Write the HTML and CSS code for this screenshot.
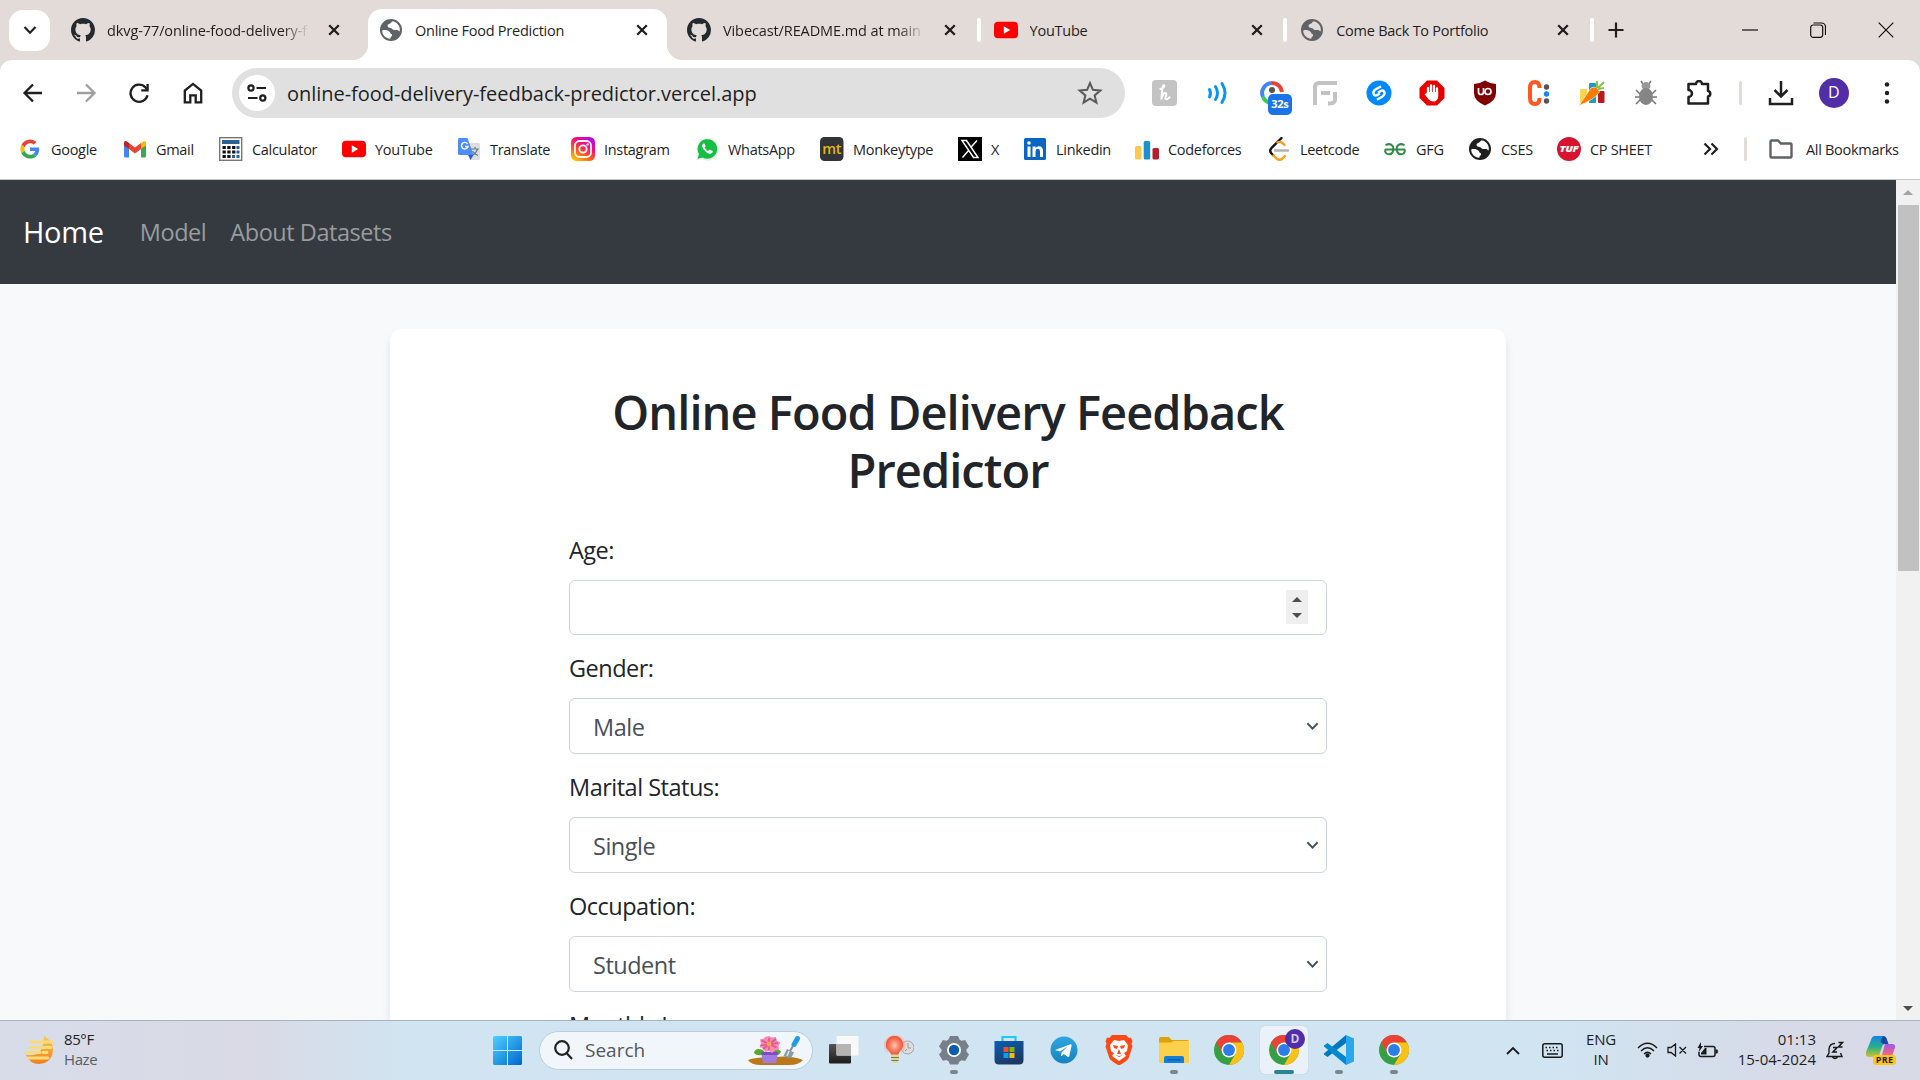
FILE: index.html
```html
<!DOCTYPE html>
<html lang="en">
<head>
<meta charset="utf-8">
<title>Online Food Prediction</title>
<link rel="stylesheet" href="styles.css">
</head>
<body>
<svg class="defs" aria-hidden="true">
  <symbol id="github" viewBox="0 0 16 16"><path fill="#24292f" d="M8 0C3.58 0 0 3.58 0 8c0 3.54 2.29 6.53 5.47 7.59.4.07.55-.17.55-.38 0-.19-.01-.82-.01-1.49-2.01.37-2.53-.49-2.69-.94-.09-.23-.48-.94-.82-1.13-.28-.15-.68-.52-.01-.53.63-.01 1.08.58 1.23.82.72 1.21 1.87.87 2.33.66.07-.52.28-.87.51-1.07-1.78-.2-3.64-.89-3.64-3.95 0-.87.31-1.59.82-2.15-.08-.2-.36-1.02.08-2.12 0 0 .67-.21 2.2.82.64-.18 1.32-.27 2-.27.68 0 1.36.09 2 .27 1.53-1.04 2.2-.82 2.2-.82.44 1.1.16 1.92.08 2.12.51.56.82 1.27.82 2.15 0 3.07-1.87 3.75-3.65 3.95.29.25.54.73.54 1.48 0 1.07-.01 1.93-.01 2.2 0 .21.15.46.55.38A8.01 8.01 0 0 0 16 8c0-4.42-3.58-8-8-8z"/></symbol>
  <symbol id="globe" viewBox="0 0 24 24"><circle cx="12" cy="12" r="11" fill="currentColor"/><path fill="var(--hole)" d="M3.2 12.500c2.800-.8 5.600-.3 7.300 1.200 1 .9.6 2 1.800 2.300 1.200.300 1 1.800.100 2.600-.9.700-.9 1.500-1.100 2.200C6.700 20.600 3.200 17 3.200 12.500zM13.600 3.300c-1.200.4-1.200 1.300-2.100 1.900-1 .7-3 .9-3 2.500 0 1.800 1.600 2.200 3 2.200 1.500 0 1.900 1.700 3.300 2.100 1.500.4 2.700-.5 4 .2.900.5 1.200 1.300 1.900 1.100.9-3.800-1.500-8.800-7.100-10z"/></symbol>
  <symbol id="youtube" viewBox="0 0 24 24"><rect y="3.800" width="24" height="16.400" rx="4" fill="#f00"/><path fill="#fff" d="M9.800 8.300v7.400l6.400-3.700z"/></symbol>
  <symbol id="close" viewBox="0 0 12 12"><path d="M1.200 1.200l9.600 9.600M10.800 1.200l-9.600 9.600" stroke="#1f1f1f" stroke-width="2.300"/></symbol>
  <symbol id="chrome" viewBox="0 0 48 48"><circle cx="24" cy="24" r="24" fill="#34a043"/><path fill="#ea4335" d="M3.200 12A24 24 0 0 1 44.800 12H24L13.600 30z"/><path fill="#fbc116" d="M44.800 12A24 24 0 0 1 24 48L34.400 30 24 12z"/><circle cx="24" cy="24" r="12" fill="#fff"/><circle cx="24" cy="24" r="9.500" fill="#2b7de9"/></symbol>
  <symbol id="chevron" viewBox="0 0 14 10"><path d="M1.500 2l5.500 5.800L12.500 2" fill="none" stroke="currentColor" stroke-width="2.100"/></symbol>
</svg>

<header class="tabstrip">
  <div class="tab-search"><svg width="14" height="10"><use href="#chevron"/></svg></div>
  <div class="tab"><svg width="24" height="24"><use href="#github"/></svg><span class="tab-title fade">dkvg-77/online-food-delivery-f</span><svg class="x" width="12" height="12"><use href="#close"/></svg></div>
  <div class="tab active"><svg class="grey" width="24" height="24"><use href="#globe"/></svg><span class="tab-title">Online Food Prediction</span><svg class="x" width="12" height="12"><use href="#close"/></svg></div>
  <div class="tab sep"><svg width="24" height="24"><use href="#github"/></svg><span class="tab-title fade">Vibecast/README.md at main ·</span><svg class="x" width="12" height="12"><use href="#close"/></svg></div>
  <div class="tab sep"><svg width="24" height="24"><use href="#youtube"/></svg><span class="tab-title">YouTube</span><svg class="x" width="12" height="12"><use href="#close"/></svg></div>
  <div class="tab sep"><svg class="grey" width="24" height="24"><use href="#globe"/></svg><span class="tab-title">Come Back To Portfolio</span><svg class="x" width="12" height="12"><use href="#close"/></svg></div>
  <svg class="newtab" width="16" height="16" viewBox="0 0 16 16"><path d="M8 .5v15M.5 8h15" stroke="#1f1f1f" stroke-width="2.200"/></svg>
  <div class="window-buttons">
    <svg width="16" height="16" viewBox="0 0 16 16"><path d="M0 8h16" stroke="#111" stroke-width="1.200"/></svg>
    <svg width="16" height="16" viewBox="0 0 16 16" fill="none" stroke="#111" stroke-width="1.200"><rect x=".7" y="3" width="12" height="12.300" rx="2.500"/><path d="M3.500 1h8a4 4 0 0 1 4 4v8"/></svg>
    <svg width="16" height="16" viewBox="0 0 16 16"><path d="M.7.700l14.600 14.600M15.300.700L.7 15.300" stroke="#111" stroke-width="1.200"/></svg>
  </div>
</header>

<div class="chrome-panel">
<div class="toolbar">
  <div class="nav-buttons">
    <svg width="24" height="24" viewBox="0 0 24 24" fill="none" stroke="#1f1f1f" stroke-width="2.300"><path d="M21 12H4M12 3.500L3.500 12l8.500 8.500"/></svg>
    <svg width="24" height="24" viewBox="0 0 24 24" fill="none" stroke="#9e9e9e" stroke-width="2.300"><path d="M3 12h17M12 3.500l8.500 8.500-8.500 8.500"/></svg>
    <svg width="24" height="24" viewBox="0 0 24 24" fill="none" stroke="#1f1f1f" stroke-width="2.300"><path d="M20.500 14.200A8.600 8.600 0 1 1 18.500 6.400L20 8.200"/><path d="M20.600 3v6.300h-6.300"/></svg>
    <svg width="24" height="24" viewBox="0 0 24 24" fill="none" stroke="#1f1f1f" stroke-width="2.300"><path d="M3.800 21.400V9.600L12 2.900l8.200 6.700v11.800h-5.500v-7H9.300v7z"/></svg>
  </div>
  <div class="omnibox">
    <div class="site-info"><svg width="20" height="20" viewBox="0 0 20 20" fill="none" stroke="#1f1f1f" stroke-width="2.200"><circle cx="4" cy="5" r="2.600"/><path d="M9.500 5H19M1 15h9.500"/><circle cx="15.800" cy="15" r="2.600"/></svg></div>
    <span class="url">online-food-delivery-feedback-predictor.vercel.app</span>
    <svg width="26" height="26" viewBox="0 0 24 24" fill="none" stroke="#5a5a5a" stroke-width="1.900"><path d="M12 2.800l2.700 6.300 6.800.6-5.200 4.500 1.600 6.700-5.900-3.600-5.900 3.600 1.600-6.700L2.500 9.700l6.800-.6z"/></svg>
  </div>
  <div class="extensions">
    <svg viewBox="0 0 26 26"><rect width="25" height="26" rx="4" fill="#c3c3c3"/><path d="M7.500 9c3 0 6-3 4.500-3.800-1.500-.4-2 5-2.600 14.300 1-5 3-7.500 4.600-6.500 1.600 1.500-2.500 6 .4 6.200 1.800.1 2.600-1 3.600-2.500" fill="none" stroke="#fff" stroke-width="2"/></svg>
    <svg viewBox="0 0 26 26" fill="none" stroke="#0b93f6" stroke-width="3" stroke-linecap="round"><path d="M4.500 9.500q2 4 0 7.500M10.500 6.500q4 6.500 0 13M17 3.500q6 9.500 0 19"/></svg>
    <div class="ext-timer"><svg viewBox="0 0 26 26" fill="none" stroke-width="4"><path d="M13 3A10 10 0 0 1 23 12" stroke="#ea4335"/><path d="M13 3A10 10 0 0 0 4 17" stroke="#4285f4"/><path d="M4 17a10 10 0 0 0 9 6" stroke="#33d14d"/><circle cx="13" cy="10" r="3" fill="#555"/></svg><b>32s</b></div>
    <svg viewBox="0 0 26 26" fill="none" stroke="#c3c3c3" stroke-width="4"><path d="M3 25V7q0-4 4-4h18M9 13h9M23 12v8q0 3.500-7 3.500"/></svg>
    <svg viewBox="0 0 26 26"><circle cx="13" cy="13" r="12.500" fill="#08f"/><path d="M15 6.200L9.500 9.600c-4 2.700-1.500 7 1.600 5.600l2.800-1.900M11 19.800l5.500-3.400c4-2.700 1.500-7-1.600-5.600l-2.800 1.900" fill="none" stroke="#fff" stroke-width="2.400"/></svg>
    <svg viewBox="0 0 26 26"><path fill="#e60000" d="M8 .5h10l7.500 7.500v10L18 25.500H8L.5 18V8z"/><path d="M9 13V8M12 12V5.500M15 12V6M18 13V8.500" stroke="#fff" stroke-width="2.300" stroke-linecap="round"/><path fill="#fff" d="M8 12h11.200v4c0 3.500-2 5.500-5 5.500-3.500 0-5.500-3-8.700-7.500l2-.7z"/></svg>
    <svg viewBox="0 0 26 26"><path fill="#800000" d="M13 .5q5.500 3.500 11 3.500v9q0 8-11 12.500Q2 21 2 13V4q5.500 0 11-3.500z"/><path d="M6.500 8v4a2.500 2.500 0 0 0 5 0V8" fill="none" stroke="#fff" stroke-width="1.700"/><circle cx="16" cy="11.500" r="3" fill="none" stroke="#fff" stroke-width="1.700"/></svg>
    <svg viewBox="0 0 26 26"><path d="M13.500 8q0-6-4.500-6Q4 2 4 8v10q0 6 5 6 4.500 0 4.500-6" fill="none" stroke="#ff5722" stroke-width="4"/><circle cx="20.500" cy="7" r="2.700" fill="#555"/><circle cx="20.500" cy="14" r="2.700" fill="#1e88e5"/><circle cx="20.500" cy="21" r="2.700" fill="#555"/></svg>
    <svg viewBox="0 0 26 26"><rect x="1" y="9" width="7" height="14" rx="1" fill="#ffd54f"/><rect x="10" y="3" width="7" height="20" rx="1" fill="#2196c9"/><rect x="19" y="11" width="6.500" height="12" rx="1" fill="#b71c1c"/><path fill="#f57c00" stroke="#fff" stroke-width=".6" d="M0 25.500L12 8q6-3 8.500 4Q15 20 0 25.500z"/><path d="M18 8V1M19 8l6-6M19 9l6-1" stroke="#8bc34a" stroke-width="2.200"/></svg>
    <svg viewBox="0 0 26 26"><path d="M3 10l4 4M2 17h6M3 24l5-5M23 10l-4 4M24 17h-6M23 24l-5-5M10 4L8 1M16 4l2-3" stroke="#777" stroke-width="1.500"/><ellipse cx="13" cy="6" rx="4.500" ry="4" fill="#999"/><ellipse cx="13" cy="16.500" rx="7" ry="8.500" fill="#858585"/></svg>
    <svg viewBox="0 0 26 26"><path d="M2.500 4H10a3 3 0 0 1 6 0h6v7a2.800 2.800 0 0 1 0 5.500v7h-19.500v-6.500a3.500 3.500 0 0 0 0-7z" fill="none" stroke="#1f1f1f" stroke-width="2.500" stroke-linejoin="round"/></svg>
  </div>
  <i class="divider"></i>
  <div class="toolbar-end">
    <svg width="26" height="26" viewBox="0 0 26 26" fill="none" stroke="#1f1f1f" stroke-width="2.500"><path d="M13 1v15M6.500 10l6.500 6.500 6.500-6.500M2 18v6h22v-6"/></svg>
    <div class="avatar">D</div>
    <svg width="26" height="26" viewBox="0 0 26 26" fill="#1f1f1f"><circle cx="13" cy="4.500" r="2.200"/><circle cx="13" cy="13" r="2.200"/><circle cx="13" cy="21.500" r="2.200"/></svg>
  </div>
</div>

<nav class="bookmarks">
  <div class="bm"><svg viewBox="-6 -6 60 60"><path fill="#EA4335" d="M24 9.500c3.540 0 6.710 1.220 9.210 3.600l6.850-6.850C35.900 2.380 30.470 0 24 0 14.620 0 6.510 5.380 2.560 13.220l7.980 6.190C12.430 13.720 17.740 9.500 24 9.500z"/><path fill="#4285F4" d="M46.980 24.550c0-1.570-.15-3.090-.38-4.550H24v9.020h12.940c-.58 2.960-2.260 5.480-4.780 7.180l7.730 6c4.510-4.180 7.090-10.360 7.090-17.650z"/><path fill="#FBBC05" d="M10.530 28.590c-.48-1.450-.76-2.990-.76-4.590s.27-3.140.76-4.590l-7.980-6.190C.92 16.460 0 20.120 0 24c0 3.880.92 7.540 2.560 10.780l7.970-6.190z"/><path fill="#34A853" d="M24 48c6.480 0 11.930-2.130 15.890-5.810l-7.730-6c-2.150 1.450-4.920 2.300-8.160 2.300-6.260 0-11.570-4.220-13.470-9.910l-7.980 6.190C6.510 42.620 14.620 48 24 48z"/></svg><span>Google</span></div>
  <div class="bm"><svg viewBox="0 0 24 24"><path fill="#4285f4" d="M1 5v14q0 1.500 1.500 1.500H6V10z"/><path fill="#34a853" d="M23 5v14q0 1.500-1.500 1.500H18V10z"/><path fill="#fbbc04" d="M18 6l2-1.500Q23 3 23 6v2.500L18 12z"/><path fill="#c5221f" d="M6 6L4 4.500Q1 3 1 6v2.500L6 12z"/><path fill="#ea4335" d="M6 6l6 4.500L18 6v6l-6 4.500L6 12z"/></svg><span>Gmail</span></div>
  <div class="bm"><svg viewBox="0 0 24 24"><rect x=".7" y=".7" width="22" height="22.600" fill="#fff" stroke="#777" stroke-width="1.400"/><path fill="#2b5f91" d="M3 3h17.500v4H3z"/><g stroke-width="3" stroke-dasharray="3.300 1.500"><path stroke="#111" d="M3.500 10.500h13M3.500 15h13M3.500 19.500h9"/><path stroke="#2b5f91" stroke-dasharray="none" d="M17.500 10.500h3M17.500 15h3M13 19.500h3M17.500 19.500h3"/></g></svg><span>Calculator</span></div>
  <div class="bm"><svg><use href="#youtube"/></svg><span>YouTube</span></div>
  <div class="bm"><svg viewBox="0 0 24 24"><path fill="#dedede" d="M10 6h11.500Q23 6 23 7.500v14q0 1.500-1.500 1.500H14z"/><path d="M14 12h8M18 10v2M20.500 12q-1 4-5.500 6.500M15.500 14q2 3.500 5.500 4.500" stroke="#607d8b" fill="none" stroke-width="1.200"/><path fill="#4d8df6" d="M2 1h8.500L16.500 18H2.500Q1 18 1 16.500V2.500Q1 1 2 1z"/><path fill="#3157c9" d="M11 18h5.500l-3 5z"/><path d="M10.500 6.800A3.300 3.300 0 1 0 11 9.500H8" fill="none" stroke="#fff" stroke-width="1.400"/></svg><span>Translate</span></div>
  <div class="bm"><svg viewBox="0 0 24 24"><defs><linearGradient id="ig" x1=".2" y1="1" x2=".8" y2="0"><stop offset="0" stop-color="#ffc400"/><stop offset=".35" stop-color="#ff5a1f"/><stop offset=".65" stop-color="#ff0a78"/><stop offset="1" stop-color="#b400ff"/></linearGradient></defs><rect width="24" height="24" rx="5.500" fill="url(#ig)"/><g fill="none" stroke="#fff" stroke-width="1.800"><rect x="4" y="4" width="16" height="16" rx="4.500"/><circle cx="12" cy="12" r="3.700"/></g><circle cx="16.600" cy="7.400" r="1.200" fill="#fff"/></svg><span>Instagram</span></div>
  <div class="bm"><svg viewBox="0 0 24 24"><path fill="#e8e8e8" d="M1 23.500l1.800-6A11 11 0 1 1 7 22z"/><path fill="#12c143" d="M2.600 21.800L4 17A9.800 9.800 0 1 1 7.600 20.500z"/><path fill="#fff" d="M8.500 6.500c-2 1-1.600 3.500 0 5.700 2 2.900 4.500 4.700 7 4.500 1.700-.3 2.300-1.500 2.200-2.700l-2.900-1.500-1.400 1.600c-1.800-.7-3-1.900-3.800-3.500l1.100-1.400-1.200-2.800z"/></svg><span>WhatsApp</span></div>
  <div class="bm"><svg viewBox="0 0 24 24"><rect width="23.500" height="24" rx="4.500" fill="#323437"/><text x="11.800" y="16.500" font-size="14.500" font-weight="600" fill="#e2b714" text-anchor="middle" textLength="19" class="glyph">mt</text></svg><span>Monkeytype</span></div>
  <div class="bm"><svg viewBox="0 0 24 24"><path d="M0 0h24v24H0z"/><path d="M4 3.500h4.500L20 20.500h-4.500zM19 3.500l-6.300 7M10.800 13.300L4.500 20.500" fill="none" stroke="#fff" stroke-width="1.500"/></svg><span>X</span></div>
  <div class="bm"><svg viewBox="0 0 24 24"><rect x="1" y="1" width="22" height="22" rx="1.500" fill="#0a66c2"/><path fill="#fff" d="M4.500 9.500h3V20h-3zM9.500 9.500h3V11q1-1.800 3.500-1.800 4 0 4 4.800v6h-3v-5.500q0-2.700-2-2.700-2.500 0-2.500 3V20h-3z"/><circle cx="6" cy="6" r="1.800" fill="#fff"/></svg><span>Linkedin</span></div>
  <div class="bm"><svg viewBox="0 0 24 24"><rect x="0" y="9" width="6.500" height="13.500" rx="1.500" fill="#f8ca4d"/><rect x="8.700" y="4" width="6.500" height="18.500" rx="1.500" fill="#1f8fd0"/><rect x="17.500" y="11" width="6.500" height="11.500" rx="1.500" fill="#b51e2d"/></svg><span>Codeforces</span></div>
  <div class="bm"><svg viewBox="0 0 24 24" fill="none" stroke-width="2.400" stroke-linecap="round"><path d="M8 13.500h13" stroke="#b3b3b3"/><path d="M14.500 1L4.500 11q-2.500 3 0 5.500l2 2" stroke="#111"/><path d="M6.500 18.500l3 3q3 2.500 6 0l2.500-2.500M17.500 8L15.500 6q-2.500-2-5-.5" stroke="#ffa116"/></svg><span>Leetcode</span></div>
  <div class="bm"><svg viewBox="0 0 24 24" fill="none" stroke="#2f8d46" stroke-width="2"><path d="M2 12.500h20M2.500 8.200q5-2.700 7.500 1.300 1 3-.5 6-2.500 3-6 1-2-1.800-1-4M21.500 8.200q-5-2.700-7.500 1.300-1 3 .5 6 2.500 3 6 1 2-1.800 1-4"/></svg><span>GFG</span></div>
  <div class="bm dark"><svg><use href="#globe"/></svg><span>CSES</span></div>
  <div class="bm"><svg viewBox="0 0 24 24"><circle cx="12" cy="12" r="12" fill="#d7142e"/><text x="12" y="15" font-size="8" font-weight="800" font-style="italic" fill="#fff" text-anchor="middle" textLength="19" lengthAdjust="spacingAndGlyphs" class="glyph">TUF</text></svg><span>CP SHEET</span></div>
  <svg class="more" width="16" height="14" viewBox="0 0 16 14" fill="none" stroke="#1f1f1f" stroke-width="2.200"><path d="M1.500 1.500L7 7l-5.500 5.500M8.500 1.500L14 7l-5.500 5.500"/></svg>
  <i class="divider"></i>
  <div class="bm all"><svg viewBox="0 0 24 24" fill="none" stroke="#5f6368" stroke-width="2.400"><path d="M1.500 4.500q0-1 1-1H9l2.800 3h9.700q1 0 1 1v12q0 1-1 1h-19q-1 0-1-1z"/></svg><span>All Bookmarks</span></div>
</nav>
</div>

<div class="viewport">
  <main class="page">
    <nav class="navbar"><a class="brand">Home</a><a>Model</a><a>About Datasets</a></nav>
    <section class="card">
      <h1>Online Food Delivery Feedback<br>Predictor</h1>
      <form class="form">
        <label>Age:</label>
        <div class="control number"><span class="spinner"><i class="tri up"></i><i class="tri down"></i></span></div>
        <label>Gender:</label>
        <div class="control select"><span>Male</span><svg width="13" height="10"><use href="#chevron"/></svg></div>
        <label>Marital Status:</label>
        <div class="control select"><span>Single</span><svg width="13" height="10"><use href="#chevron"/></svg></div>
        <label>Occupation:</label>
        <div class="control select"><span>Student</span><svg width="13" height="10"><use href="#chevron"/></svg></div>
        <label>Monthly Income:</label>
      </form>
    </section>
  </main>
  <aside class="scrollbar"><i class="tri up"></i><div class="thumb"></div><i class="tri down"></i></aside>
</div>

<footer class="taskbar">
  <div class="weather">
    <svg width="31" height="30" viewBox="0 0 31 30"><defs><linearGradient id="moon" x1="0" y1="0" x2="0" y2="1"><stop offset="0" stop-color="#fcc94d"/><stop offset="1" stop-color="#f07f1d"/></linearGradient></defs><path fill="url(#moon)" d="M20 1q8 5 9 12 0 15-14 16Q6 29 2 20q18 3 18-19z"/><path d="M7 7h22M6 12.500h21M2 17.500h14M19 17.500h4M4 23h20" stroke="#f9dc7a" stroke-width="2.800" stroke-linecap="round"/></svg>
    <p><span>85°F</span><span class="dim">Haze</span></p>
  </div>
  <svg class="start" width="29" height="29" viewBox="0 0 29 29"><defs><linearGradient id="win" x1="0" y1="0" x2="1" y2="1"><stop offset="0" stop-color="#4fd0ff"/><stop offset="1" stop-color="#0067cf"/></linearGradient></defs><path fill="url(#win)" d="M1 0h13v14H0V1zM15 0h13l1 1v13H15zM0 15h14v14H1l-1-1zM15 15h14v13l-1 1H15z"/></svg>
  <div class="search">
    <svg width="19" height="20" viewBox="0 0 19 20" fill="none" stroke="#222" stroke-width="2.200"><circle cx="8" cy="8" r="6.800"/><path d="M12.500 13l5.500 6"/></svg>
    <span>Search</span>
    <svg width="58" height="32" viewBox="0 0 58 32"><path fill="#b9791b" d="M1 26q8-3 26-3 18-2 29 3-4 5-14 5H14Q4 31 1 26z"/><path fill="#5aa832" d="M7 19q1-6 9-3l3 4q-9 3-12-1zM34 17q-7-4-10 4 9 2 10-4z"/><path fill="#a07be2" d="M14 18h17l-2 11H16z"/><path fill="#7a4dc0" d="M14 18h17l-.5 3h-16z"/><path fill="#f78ab4" d="M22 2l3 1.500 4-.5.5 3.500 4 2-2 3.500.5 4-4 .5-3 2.500-3-2-4 1-1.500-3.500-4-1.500 1.500-3.500-1-4 4-1L18 3z"/><path d="M22 4v12M14.500 6.500l15 7M29 5l-13 10M13.500 11.500L31 9" stroke="#e2528c" stroke-width="1.600"/><circle cx="22" cy="10" r="2.500" fill="#f9a04a"/><path d="M50.500 4.500l-3.500 6" stroke="#1e9be5" stroke-width="5" stroke-linecap="round"/><path d="M46 12l-3 5" stroke="#78909c" stroke-width="2"/><path fill="#8b9ba5" d="M40 15l7 3.500-3 5.500q-3 .5-7.500-2z"/><path d="M42 17l-2 5" stroke="#dfe6ea" stroke-width="1.500"/></svg>
  </div>
  <div class="apps">
    <div class="app"><svg viewBox="0 0 30 30"><defs><linearGradient id="tv" x1="0" y1="0" x2="0" y2="1"><stop offset="0" stop-color="#555"/><stop offset="1" stop-color="#1c1c1c"/></linearGradient></defs><rect x="0" y="9" width="22" height="19.500" rx="1" fill="url(#tv)"/><rect x="7.500" y="1" width="22" height="19.500" rx="1" fill="#f8f8f8"/><path fill="#b4b4b4" d="M7.500 9H22v11.500H7.500z"/></svg></div>
    <div class="app"><svg viewBox="0 0 30 30"><defs><radialGradient id="bulb"><stop offset="0" stop-color="#ffc9ba"/><stop offset=".45" stop-color="#fb8a70"/><stop offset="1" stop-color="#f2512f"/></radialGradient></defs><circle cx="23.500" cy="12.500" r="6.500" fill="#dcdcdc" stroke="#a8a8a8"/><path d="M24 8v5h3M21 16l2-2" stroke="#999" fill="none"/><path fill="#f5a695" opacity=".5" d="M10.500 0a10.500 10 0 0 1 8 17H3a10.500 10 0 0 1 7.500-17z"/><path fill="url(#bulb)" d="M10.500 1a8.500 8.500 0 0 1 5.500 15l-2 4H7.500L5 16A8.500 8.500 0 0 1 10.500 1z"/><path fill="#dcd99a" d="M7 19.500h8v6L13 28H9l-2-2.500z"/><path d="M7 22.500h8M7.500 25.500h7" stroke="#77755a"/></svg></div>
    <div class="app"><svg viewBox="0 0 30 30"><path fill="#77808a" d="M11 1l8 0 1.500 3.500 2 1.200 3.700-.7 3.800 6.600-2.500 2.900v2l2.500 3-3.800 6.500-3.700-.7-2 1.200L19 29.500h-8l-1.500-3.300-2-1.200-3.700.7L0 19.500l2.500-3v-2L0 11.600 3.800 5l3.700.7 2-1.200z"/><circle cx="15" cy="15" r="7" fill="#fff"/><circle cx="15" cy="15" r="5.200" fill="#0b5cad"/></svg><i></i></div>
    <div class="app"><svg viewBox="0 0 30 30"><defs><linearGradient id="store" x1="0" y1="0" x2=".5" y2="1"><stop offset="0" stop-color="#0a5fb8"/><stop offset="1" stop-color="#1c3966"/></linearGradient></defs><path d="M8.500 7V2h13v5" fill="none" stroke="#1ec8f5" stroke-width="2.200"/><path fill="url(#store)" d="M.5 6h29v19q0 4.500-4.500 4.500H5Q.5 29.500.5 25z"/><path fill="#f25022" d="M9.500 12h5v5h-5z"/><path fill="#7fba00" d="M15.500 12h5v5h-5z"/><path fill="#00a4ef" d="M9.500 18h5v5h-5z"/><path fill="#ffb900" d="M15.500 18h5v5h-5z"/></svg></div>
    <div class="app"><svg viewBox="0 0 30 30"><defs><linearGradient id="tg" x1="0" y1="0" x2="0" y2="1"><stop offset="0" stop-color="#2fa6e0"/><stop offset="1" stop-color="#1583bd"/></linearGradient></defs><circle cx="15" cy="15" r="13.500" fill="url(#tg)"/><path fill="#fff" d="M6 15L21.500 9.200q1.500-.4 1.100 1.500L20.300 21q-.5 1.600-2.100.6l-3.500-2.600-2 1.900-.7.200.5-3.700 6-6-7.500 5.200z"/></svg></div>
    <div class="app"><svg viewBox="0 0 30 30"><path fill="#fb4a17" d="M8 0h14l3 3 2-.5 1.500 4-1 2 1 3-4 12q-2 3-9.500 7-7.500-4-9.500-7l-4-12 1-3-1-2 1.500-4L5 3z"/><path fill="#fff" d="M10 5l5 1 5-1 4 5-1 6-3 2 2 3-7 5-7-5 2-3-3-2-1-6z"/><path fill="#fb4a17" d="M9 10l5 1-1 3-3-1zM21 10l-5 1 1 3 3-1zM15 14l2 5h-4zM11 20l4 2 4-2-4 1z"/></svg></div>
    <div class="app"><svg viewBox="0 0 30 30"><path fill="#e0a008" d="M0 4q0-2 2-2h8l2.500 3H28q2 0 2 2v4H0z"/><path fill="#fcd04b" d="M0 7.500h12L14.500 6H30v22H0z"/><path fill="#1180d8" d="M5 23q0-2 2-2h16q2 0 2 2v5H5z"/><path d="M8.500 24.800h13" stroke="#0a4f93"/></svg><i></i></div>
    <div class="app"><svg><use href="#chrome"/></svg></div>
    <div class="app current"><svg><use href="#chrome"/></svg><b>D</b><i></i></div>
    <div class="app"><svg viewBox="0 0 30 30"><path fill="#0277bd" d="M22 0v8L3.500 22 0 19.500v-1z"/><path fill="#0288d1" d="M22 30v-8L3.500 8 0 10.500v1z"/><path fill="#29a8f0" d="M22 0l8 3.500v23L22 30z"/></svg><i></i></div>
    <div class="app"><svg><use href="#chrome"/></svg><i></i></div>
  </div>
  <div class="tray">
    <svg class="t-caret" width="14" height="9" viewBox="0 0 14 9"><path d="M1 8l6-6 6 6" fill="none" stroke="#1a1a1a" stroke-width="1.800"/></svg>
    <svg class="t-kbd" width="21" height="15" viewBox="0 0 21 15"><rect x=".8" y=".8" width="19.400" height="13.400" rx="2" fill="none" stroke="#1a1a1a" stroke-width="1.500"/><path d="M3.500 4.500h14M4.500 7.500h13" stroke="#1a1a1a" stroke-width="1.500" stroke-dasharray="1.500 2"/><path d="M5 11h11" stroke="#1a1a1a" stroke-width="1.500"/></svg>
    <p class="lang"><span>ENG</span><span>IN</span></p>
    <svg class="t-wifi" width="21" height="16" viewBox="0 0 21 16" fill="none" stroke="#1a1a1a" stroke-width="1.500"><path d="M1 6q9.500-9.500 19 0M4 9q6.500-6.500 13 0M7 12q3.500-3.500 7 0"/><circle cx="10.500" cy="13.500" r="1.400" fill="#1a1a1a"/></svg>
    <svg class="t-vol" width="20" height="14" viewBox="0 0 20 14" fill="none" stroke="#1a1a1a" stroke-width="1.300"><path d="M1 4.500h3L8.500 1v12L4 9.500H1zM12.500 4l6.500 6.500M19 4l-6.500 6.500"/></svg>
    <svg class="t-bat" width="21" height="17" viewBox="0 0 21 17"><path d="M7 4.500h9q2 0 2 2v6q0 2-2 2H4q-2 0-2-2V10" fill="none" stroke="#1a1a1a" stroke-width="1.500"/><path fill="#1a1a1a" d="M18.500 7.500H20q.8 0 .8.800v2.400q0 .8-.8.800h-1.500zM4 0L.5 6h2l-1 4.500L6 4H4zM4 12.500V11l4-5h1.500v6.500z"/></svg>
    <p class="clock"><span>01:13</span><span>15-04-2024</span></p>
    <svg class="t-bell" width="18" height="19" viewBox="0 0 18 19" fill="none" stroke="#1a1a1a" stroke-width="1.400"><path d="M9 2.500Q3.500 2.500 3 8v4l-2 3.500h15L14.500 12M6.500 16q2.500 3 5 0"/><path d="M7 6.500h4L7 11h4M12.500 1.500h4L12.500 6h4" stroke-width="1.600"/></svg>
    <div class="copilot"><svg width="30" height="24" viewBox="0 0 30 24"><defs><linearGradient id="cpa" x1="0" y1="0" x2="0" y2="1"><stop offset="0" stop-color="#1583e6"/><stop offset=".5" stop-color="#25b08a"/><stop offset="1" stop-color="#e6c222"/></linearGradient><linearGradient id="cpb" x1="0" y1="0" x2="0" y2="1"><stop offset="0" stop-color="#9b59e8"/><stop offset=".6" stop-color="#f0628c"/><stop offset="1" stop-color="#f9a04a"/></linearGradient></defs><path fill="url(#cpa)" d="M9 0h8q3 0 4 4l1 4q-4-2-6 3l-3 9q-1 3-5 1H3q-4 0-3-5L5 4q1-4 4-4z"/><path fill="#1a46a8" d="M17 0q3 0 4 4l1.500 4h-4q-3 0-4-3z"/><path fill="url(#cpb)" d="M19 8h7q4 0 3 4l-3 8q-1 4-4 4H11q4-1 5-5l2-8q.5-2 1-3z"/></svg><b>PRE</b></div>
  </div>
</footer>
</body>
</html>
```
FILE: styles.css
```css
* { box-sizing: border-box; margin: 0; padding: 0; }
html, body { width: 1920px; height: 1080px; overflow: hidden; }
body { font-family: "Open Sans", "Noto Sans", sans-serif; font-stretch: 92%; color: #1f1f1f; background: #e3dbd8; display: flex; flex-direction: column; }
svg { display: block; flex: none; }
.defs { position: absolute; width: 0; height: 0; }
.glyph { font-family: "Open Sans", sans-serif; }

/* tab strip */
.tabstrip { height: 60px; display: flex; align-items: center; flex: none; }
.tab-search { width: 41px; height: 41px; margin: 0 10px 0 9px; border-radius: 14px; background: #fff; display: grid; place-items: center; }
.tab { --hole: #e3dbd8; position: relative; width: 308px; height: 60px; padding-left: 11px; display: grid; grid-template-columns: 24px 204px 12px; column-gap: 12px; align-items: center; }
.tab.sep { width: 306.600px; }
.tab .x { margin-left: 5px; }
.tab-title { font-size: 14.500px; white-space: nowrap; overflow: hidden; letter-spacing: -.25px; }
.fade { mask-image: linear-gradient(90deg, #000 86%, transparent 99%); width: 204px; letter-spacing: -.1px; }
.grey { color: #5f6368; }
.tab.active { --hole: #fff; isolation: isolate; }
.tab.active::before { content: ""; position: absolute; z-index: -1; left: 0; top: 9px; width: 299px; height: 51px; border-radius: 14px 14px 0 0; background: #fff; }
.tab.active::after { content: ""; position: absolute; z-index: -2; left: -16px; bottom: 0; width: 331px; height: 16px; background: radial-gradient(circle at 0 0, transparent 16px, #fff 16.500px) left / 16px 16px no-repeat, radial-gradient(circle at 100% 0, transparent 16px, #fff 16.500px) right / 16px 16px no-repeat; }
.tab.sep::after { content: ""; position: absolute; right: 2px; top: 18px; width: 4px; height: 24px; border-radius: 2px; background: #fff; }
.newtab { margin-left: 12px; }
.window-buttons { margin-left: auto; margin-right: 26px; display: flex; gap: 52px; }

/* toolbar */
.chrome-panel { height: 120px; flex: none; background: #fff; border-radius: 12px 12px 0 0; border-bottom: 1px solid #c9c9c9; }
.toolbar { height: 66px; display: flex; align-items: center; }
.nav-buttons { display: flex; gap: 29.200px; margin-left: 21px; width: 211px; }
.omnibox { width: 893px; height: 50px; border-radius: 25px; background: #e0e0e0; padding: 0 22px 0 7px; display: flex; align-items: center; }
.site-info { width: 36px; height: 36px; border-radius: 50%; background: #fff; display: grid; place-items: center; }
.url { flex: 1; margin-left: 12px; font-size: 20px; letter-spacing: -.040px; }
.extensions { display: flex; gap: 27.400px; margin-left: 27px; }
.extensions svg { width: 26px; height: 26px; }
.ext-timer { position: relative; width: 26px; height: 26px; }
.ext-timer b { position: absolute; left: 9px; top: 14px; width: 24px; height: 21px; border-radius: 5px; background: #1a73e8; color: #fff; font-size: 11px; line-height: 20px; text-align: center; letter-spacing: -.3px; }
.divider { width: 3px; height: 24px; border-radius: 2px; background: #e3dbd8; }
.toolbar .divider { margin-left: 27px; }
.toolbar-end { display: flex; align-items: center; gap: 25px; margin-left: 26px; }
.avatar { width: 30px; height: 30px; border-radius: 50%; background: #512da8; color: #fff; font-size: 16px; line-height: 29px; text-align: center; }

/* bookmarks */
.bookmarks { height: 46px; display: grid; align-items: center; padding-left: 18px; grid-template-columns: 105px 96px 123px 115px 114px 124px 125px 138px 65px 112px 132px 116px 85px 89px 146px 41px 25px 150px; }
.bm { --hole: #fff; display: flex; align-items: center; gap: 9px; font-size: 14.500px; letter-spacing: -.3px; white-space: nowrap; }
.bm svg { width: 24px; height: 24px; }
.bm.dark svg { color: #1f1f1f; }
.bm.all { gap: 13px; }
.bookmarks .divider { height: 24px; }

/* page */
.viewport { flex: 1; min-height: 0; display: flex; overflow: hidden; }
.page { width: 1896px; background: #f8f9fa; overflow: hidden; }
.navbar { height: 104px; background: #343a40; display: flex; align-items: center; padding: 0 0 1px 23px; font-size: 23.500px; }
.navbar a { color: #999c9f; margin-left: 24px; letter-spacing: -.45px; }
.navbar a.brand { color: #fff; font-size: 29px; margin: 0 12px 0 0; letter-spacing: -.3px; }
.card { width: 1116px; margin: 45px 0 0 390px; height: 900px; padding: 55px 179px; border-radius: 12px; background: #fff; box-shadow: 0 6px 9px rgba(0,0,0,.1); color: #212529; }
h1 { font-size: 47px; line-height: 57.600px; font-weight: 600; text-align: center; letter-spacing: -.95px; }
.form { margin-top: 33px; font-size: 23.500px; }
.form label { display: block; height: 36px; line-height: 36px; margin-bottom: 12px; letter-spacing: -.5px; }
.control { height: 55.800px; margin-bottom: 15.200px; border: 1px solid #ced4da; border-radius: 6px; padding: 0 7px 0 23px; display: flex; align-items: center; justify-content: space-between; color: #495057; letter-spacing: -.5px; }
.control > span:not(.spinner) { padding-top: 2px; }
.control.number { height: 55px; justify-content: flex-end; padding-right: 18px; }
.spinner { width: 22px; height: 34px; margin-bottom: 1px; background: #efefef; display: flex; flex-direction: column; align-items: center; justify-content: center; gap: 11px; }
.tri { width: 0; height: 0; border: 5px solid transparent; color: #4d4d4d; }
.tri.up { border-top: 0; border-bottom-color: currentColor; }
.tri.down { border-bottom: 0; border-top-color: currentColor; }
.scrollbar { width: 24px; background: #f1f1f1; display: flex; flex-direction: column; align-items: center; padding: 10px 0 9px; }
.scrollbar .tri.up { color: #a3a3a3; }
.thumb { width: 21px; height: 366px; margin: 10px 0 auto 1px; background: #c1c1c1; }

/* taskbar */
.taskbar { height: 60px; flex: none; border-top: 1px solid #a5b3bf; background: linear-gradient(90deg, #d8dce9 0, #d9dae6 260px, #d1e4f1 400px, #d1e4f1 1560px, #d7dae7 1800px, #d8dae6); display: flex; align-items: center; padding-bottom: 1px; font-size: 15px; line-height: 20px; }
.taskbar p { display: flex; flex-direction: column; letter-spacing: -.2px; padding-bottom: 3px; }
.weather { display: flex; align-items: center; gap: 9px; margin-left: 24px; width: 469px; }
.weather p { letter-spacing: -.4px; }
.dim { color: #5a5d63; }
.search { width: 274px; height: 39px; margin-left: 17px; border-radius: 20px; border: 1px solid #b9cddc; background: #f1f6fb; display: flex; align-items: center; padding: 0 7px 0 14px; }
.search span { flex: 1; margin-left: 12px; font-size: 19px; color: #55585c; }
.apps { display: flex; gap: 7px; margin-left: 7px; }
.app { position: relative; width: 48px; height: 48px; display: grid; place-items: center; border-radius: 5px; }
.app svg { width: 30px; height: 30px; }
.app i { position: absolute; left: 20px; bottom: 0; width: 8px; height: 4px; border-radius: 2px; background: #7b858c; }
.app.current { background: #eaf1f8; box-shadow: 0 0 1px #9fb4c4; }
.app.current i { left: 14px; width: 20px; background: #2a8593; }
.app b { position: absolute; left: 25px; top: 3px; width: 20px; height: 20px; border-radius: 50%; background: #512da8; color: #cfc4ee; font-size: 12px; text-align: center; }
.tray { margin-left: auto; display: flex; align-items: center; width: 414px; }
.t-kbd { margin-left: 22px; }
.lang { width: 30px; margin-left: 23px; align-items: center; }
.t-wifi { margin-left: 21px; }
.t-vol { margin-left: 9px; }
.t-bat { margin-left: 10px; }
.tray .clock { width: 98px; align-items: flex-end; letter-spacing: 0; }
.t-bell { margin-left: 10px; }
.copilot { position: relative; margin-left: 22px; width: 30px; height: 28px; }
.copilot b { position: absolute; left: 7px; top: 19px; width: 23px; height: 10px; border-radius: 3px; background: #ffc61a; font-size: 9px; line-height: 10px; text-align: center; letter-spacing: .3px; }
```
